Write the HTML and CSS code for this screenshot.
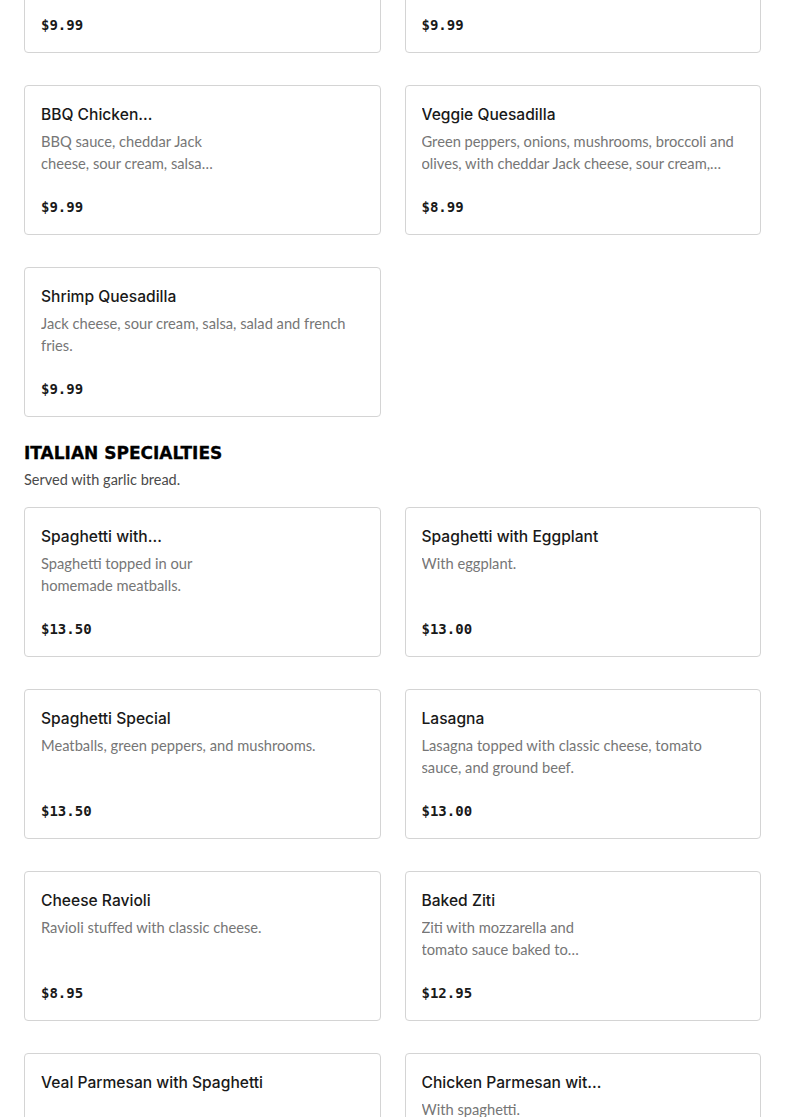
FILE: index.html
```html
<!DOCTYPE html>
<html lang="en">
<head>
<meta charset="utf-8">
<title>Menu</title>
<link rel="stylesheet" href="styles.css">
</head>
<body>
<main class="menu">
  <section class="section section-scrolled">
    <div class="grid">
      <article class="card card-partial">
        <div class="card-price">$9.99</div>
      </article>
      <article class="card card-partial">
        <div class="card-price">$9.99</div>
      </article>
      <article class="card card-media">
        <h3 class="card-title">BBQ Chicken Quesadilla</h3>
        <p class="card-desc">BBQ sauce, cheddar Jack cheese, sour cream, salsa, salad and french fries.</p>
        <div class="card-price">$9.99</div>
      </article>
      <article class="card">
        <h3 class="card-title">Veggie Quesadilla</h3>
        <p class="card-desc">Green peppers, onions, mushrooms, broccoli and olives, with cheddar Jack cheese, sour cream, salsa, salad and french fries.</p>
        <div class="card-price">$8.99</div>
      </article>
      <article class="card">
        <h3 class="card-title">Shrimp Quesadilla</h3>
        <p class="card-desc">Jack cheese, sour cream, salsa, salad and french fries.</p>
        <div class="card-price">$9.99</div>
      </article>
    </div>
  </section>

  <section class="section">
    <header class="section-head">
      <h2 class="section-title">ITALIAN SPECIALTIES</h2>
      <p class="section-sub">Served with garlic bread.</p>
    </header>
    <div class="grid">
      <article class="card card-media">
        <h3 class="card-title">Spaghetti with Meatballs</h3>
        <p class="card-desc">Spaghetti topped in our homemade meatballs.</p>
        <div class="card-price">$13.50</div>
      </article>
      <article class="card">
        <h3 class="card-title">Spaghetti with Eggplant</h3>
        <p class="card-desc">With eggplant.</p>
        <div class="card-price">$13.00</div>
      </article>
      <article class="card">
        <h3 class="card-title">Spaghetti Special</h3>
        <p class="card-desc">Meatballs, green peppers, and mushrooms.</p>
        <div class="card-price">$13.50</div>
      </article>
      <article class="card">
        <h3 class="card-title">Lasagna</h3>
        <p class="card-desc">Lasagna topped with classic cheese, tomato sauce, and ground beef.</p>
        <div class="card-price">$13.00</div>
      </article>
      <article class="card">
        <h3 class="card-title">Cheese Ravioli</h3>
        <p class="card-desc">Ravioli stuffed with classic cheese.</p>
        <div class="card-price">$8.95</div>
      </article>
      <article class="card card-media">
        <h3 class="card-title">Baked Ziti</h3>
        <p class="card-desc">Ziti with mozzarella and tomato sauce baked to perfection.</p>
        <div class="card-price">$12.95</div>
      </article>
      <article class="card">
        <h3 class="card-title">Veal Parmesan with Spaghetti</h3>
      </article>
      <article class="card card-media card-media-lg">
        <h3 class="card-title">Chicken Parmesan with Spaghetti</h3>
        <p class="card-desc">With spaghetti.</p>
      </article>
    </div>
  </section>
</main>
</body>
</html>
```

FILE: styles.css
```css
* {
  box-sizing: border-box;
}

html, body {
  margin: 0;
  padding: 0;
  background: #ffffff;
}

body {
  font-family: "Inter", "Liberation Sans", sans-serif;
  color: #191919;
  overflow: hidden;
}

.menu {
  padding: 0 24px;
}

.section-scrolled {
  margin-top: -97px;
}

.grid {
  display: grid;
  grid-template-columns: 1fr 1fr;
  column-gap: 24px;
  row-gap: 32px;
}

.section + .section {
  margin-top: 24px;
}

.section-head {
  margin-bottom: 16px;
}

.section-title {
  margin: 0;
  font-family: "DejaVu Sans", "Liberation Sans", sans-serif;
  font-weight: bold;
  font-size: 17px;
  line-height: 24px;
  color: #000000;
  -webkit-text-stroke: 0.3px #000000;
}

.section-sub {
  margin: 4px 0 0;
  font-family: "Lato", "Inter", sans-serif;
  font-size: 14.5px;
  line-height: 22px;
  color: #4a4a4a;
}

.card {
  border: 1px solid #d4d4d4;
  border-radius: 4px;
  padding: 16px;
  background: #ffffff;
  display: flex;
  flex-direction: column;
  height: 150px;
}

.card-partial {
  justify-content: flex-end;
}

.card-partial .card-price {
  margin-top: 0;
}

.card-title {
  margin: 1px 0 0;
  height: 24px;
  font-size: 15.6px;
  line-height: 24px;
  font-weight: 500;
  color: #191919;
  overflow: hidden;
  display: -webkit-box;
  -webkit-box-orient: vertical;
  -webkit-line-clamp: 1;
}

.card-desc {
  margin: 3px 0 0;
  font-family: "Lato", "Inter", sans-serif;
  font-size: 14.7px;
  line-height: 22px;
  color: #767676;
  height: 44px;
  overflow: hidden;
  display: -webkit-box;
  -webkit-box-orient: vertical;
  -webkit-line-clamp: 2;
}

.card-media .card-title {
  max-width: 178px;
}

.card-media .card-desc {
  max-width: 174px;
}

.card-media-lg .card-title {
  max-width: 186px;
}

.card-price {
  margin-top: 23px;
  font-family: "DejaVu Sans Mono", "Liberation Mono", monospace;
  font-weight: bold;
  font-size: 14px;
  line-height: 22px;
  color: #191919;
}
```
